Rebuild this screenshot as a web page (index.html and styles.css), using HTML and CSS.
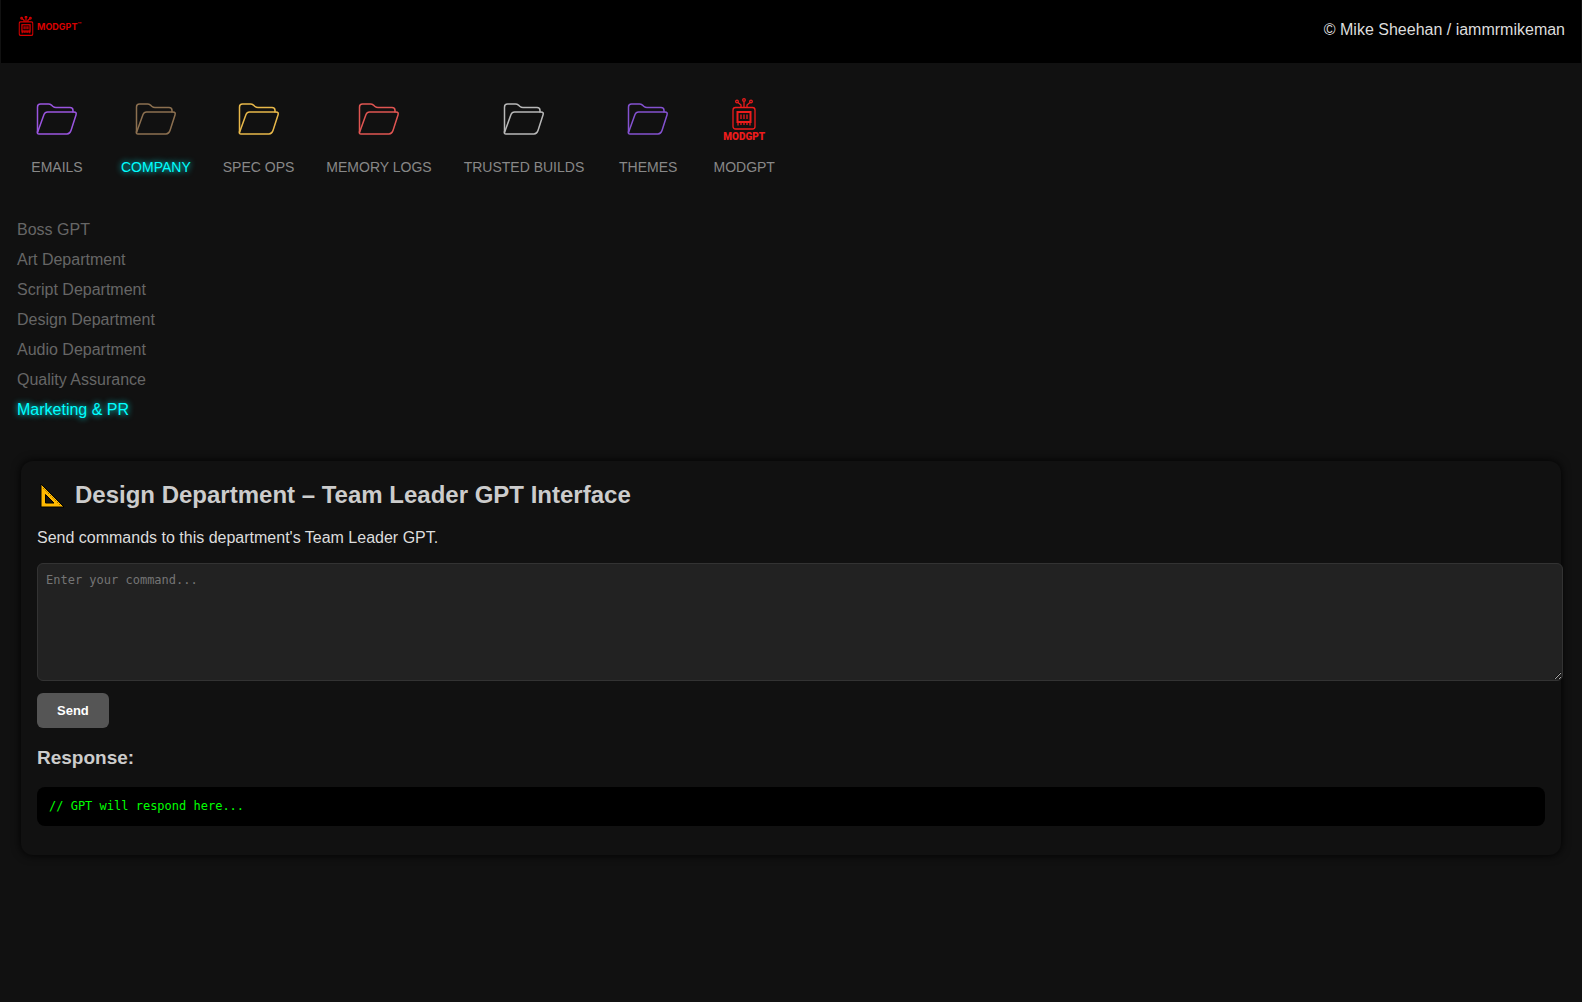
FILE: index.html
```html
<!DOCTYPE html>
<html lang="en">
<head>
<meta charset="utf-8">
<title>ModGPT</title>
<meta name="viewport" content="width=device-width, initial-scale=1">
<link rel="stylesheet" href="styles.css">
</head>
<body>
<svg class="symbols" aria-hidden="true">
  <symbol id="folder" viewBox="0 0 64 64">
    <path d="M12.500 45.500V20q0-3 3-3h8q1.500 0 3 1.200l1.500 1.300q1.200 1 3 1h14q3 0 3 3v2"/>
    <path d="M12.500 45.500 19 27.500q1-2.500 3.500-2.500H49q3 0 2 3L46 43.500q-1.200 3.500-4 3.500H14q-2.200 0-1.500-2.500z"/>
  </symbol>
  <symbol id="robot" viewBox="0 0 24 32">
    <rect x="1" y="9.500" width="22" height="21.500" rx="2.500"/>
    <path d="M9 9V7L6 4.500M12 9V4M15 9V7l3-2.500"/>
    <circle cx="5" cy="3.500" r="1.300"/>
    <circle cx="12" cy="2" r="1.300"/>
    <circle cx="19" cy="3.500" r="1.300"/>
    <rect x="5.500" y="14" width="13" height="10" stroke-width="2"/>
    <path d="M9 16.500V21M12 16.500V21M15 16.500V21M6 24v3.500M9 24v3M12 24v3M15 24v3M18 24v3.500"/>
  </symbol>
</svg>

<header class="topbar">
  <a class="brand" href="#">
    <svg class="brand-icon" viewBox="0 0 24 32"><use href="#robot"/></svg>
    <span class="brand-name">MODGPT<span class="brand-mark">™</span></span>
  </a>
  <span class="credit">© Mike Sheehan / iammrmikeman</span>
</header>

<nav class="folders">
  <a class="folder violet" href="#"><svg class="folder-icon"><use href="#folder"/></svg>EMAILS</a>
  <a class="folder brown active" href="#"><svg class="folder-icon"><use href="#folder"/></svg>COMPANY</a>
  <a class="folder gold" href="#"><svg class="folder-icon"><use href="#folder"/></svg>SPEC OPS</a>
  <a class="folder coral" href="#"><svg class="folder-icon"><use href="#folder"/></svg>MEMORY LOGS</a>
  <a class="folder silver" href="#"><svg class="folder-icon"><use href="#folder"/></svg>TRUSTED BUILDS</a>
  <a class="folder purple" href="#"><svg class="folder-icon"><use href="#folder"/></svg>THEMES</a>
  <a class="folder" href="#">
    <span class="modgpt-icon">
      <svg class="modgpt-robot" viewBox="0 0 24 32"><use href="#robot"/></svg>
      <span class="modgpt-name">MODGPT</span>
    </span>MODGPT</a>
</nav>

<nav class="departments">
  <a href="#">Boss GPT</a>
  <a href="#">Art Department</a>
  <a href="#">Script Department</a>
  <a href="#">Design Department</a>
  <a href="#">Audio Department</a>
  <a href="#">Quality Assurance</a>
  <a class="active" href="#">Marketing &amp; PR</a>
</nav>

<main class="panel">
  <h2 class="panel-title">
    <svg class="triangle" viewBox="0 0 30 28">
      <path fill="#ffb900" fill-rule="evenodd" stroke="#000" d="M4 3v23h23zM8.500 13.500V22H17z"/>
      <path fill="none" stroke="#6b4c00" stroke-dasharray="1 1.500" d="M6 7l17 17"/>
    </svg>
    Design Department – Team Leader GPT Interface
  </h2>
  <label class="panel-text" for="command">Send commands to this department's Team Leader GPT.</label>
  <textarea class="command" id="command" placeholder="Enter your command..."></textarea>
  <button class="send" type="button">Send</button>
  <h3 class="response-title">Response:</h3>
  <pre class="response">// GPT will respond here...</pre>
</main>
</body>
</html>
```
FILE: styles.css
```css
body {
  box-sizing: border-box;
  min-height: 100vh;
  margin: 0;
  padding: 0 1px 20px;
  background: #111;
  color: #ccc;
  font: 16px/18px "Liberation Sans", Arial, sans-serif;
}

a {
  color: inherit;
  text-decoration: none;
}

.symbols {
  display: none;
}

.topbar {
  display: flex;
  justify-content: space-between;
  padding: 16px;
  background: #000;
}

.credit {
  padding: 5px 0 8px;
  color: #ddd;
}

.brand {
  display: flex;
  align-items: center;
  height: 20px;
  padding-left: 1px;
  gap: 3px;
  color: #d80000;
}

.brand-icon {
  width: 16px;
  height: 20px;
  fill: none;
  stroke: currentColor;
  stroke-width: 2;
}

.brand-name {
  display: flex;
  padding-top: 2px;
  font: bold 9px/12px Inter, sans-serif;
}

.brand-mark {
  font-size: 6px;
  line-height: 8px;
}

.folders {
  display: flex;
  gap: 32px;
  padding: 24px;
}

.folder {
  display: flex;
  flex-direction: column;
  align-items: center;
  gap: 8px;
  color: #888;
  font-size: 14px;
  line-height: 16px;
  white-space: nowrap;
}

.folder-icon {
  width: 64px;
  height: 64px;
  fill: none;
  stroke-width: 1.5;
}

.violet .folder-icon { stroke: #9a55e0; }
.brown .folder-icon { stroke: #8c7050; }
.gold .folder-icon { stroke: #e8b84a; }
.coral .folder-icon { stroke: #e05552; }
.silver .folder-icon { stroke: #b8b8b8; }
.purple .folder-icon { stroke: #8452d0; }

.modgpt-icon {
  display: flex;
  flex-direction: column;
  align-items: center;
  width: 64px;
  height: 53px;
  padding-top: 11px;
  color: #ed1c1c;
}

.modgpt-robot {
  width: 24px;
  height: 32px;
  fill: none;
  stroke: currentColor;
  stroke-width: 1.3;
}

.modgpt-name {
  font: 900 10px/13px Roboto, sans-serif;
}

.folder.active,
.departments .active {
  color: #0ff;
  text-shadow: 0 0 6px #0ff;
}

.departments {
  display: flex;
  flex-direction: column;
  align-items: flex-start;
  gap: 12px;
  padding: 22px 16px 42px;
  color: #666;
}

.panel {
  margin: 0 20px;
  padding: 20px 16px 29px;
  border-radius: 12px;
  box-shadow: 0 0 10px #000;
}

.panel-title {
  display: flex;
  align-items: center;
  gap: 8px;
  margin: 0 0 20px;
  font-size: 24px;
  line-height: 28px;
}

.triangle {
  width: 30px;
  height: 28px;
}

.panel-text {
  display: block;
  margin-bottom: 16px;
  color: #ddd;
}

.command {
  display: block;
  width: 100%;
  height: 100px;
  padding: 8px;
  border: 1px solid #333;
  border-radius: 6px;
  background: #222;
  color: #ccc;
  font: 12px/16px "DejaVu Sans Mono", monospace;
}

.send {
  display: block;
  height: 35px;
  margin: 12px 0 20px;
  padding: 0 20px;
  border: 0;
  border-radius: 6px;
  background: #555;
  color: #fff;
  font: bold 13px/15px "Liberation Sans", Arial, sans-serif;
}

.response-title {
  margin: 0 0 19px;
  font-size: 19px;
  line-height: 20px;
}

.response {
  margin: 0;
  padding: 12px;
  border-radius: 8px;
  background: #000;
  color: #0f0;
  font: 12px/15px "DejaVu Sans Mono", monospace;
}
```
